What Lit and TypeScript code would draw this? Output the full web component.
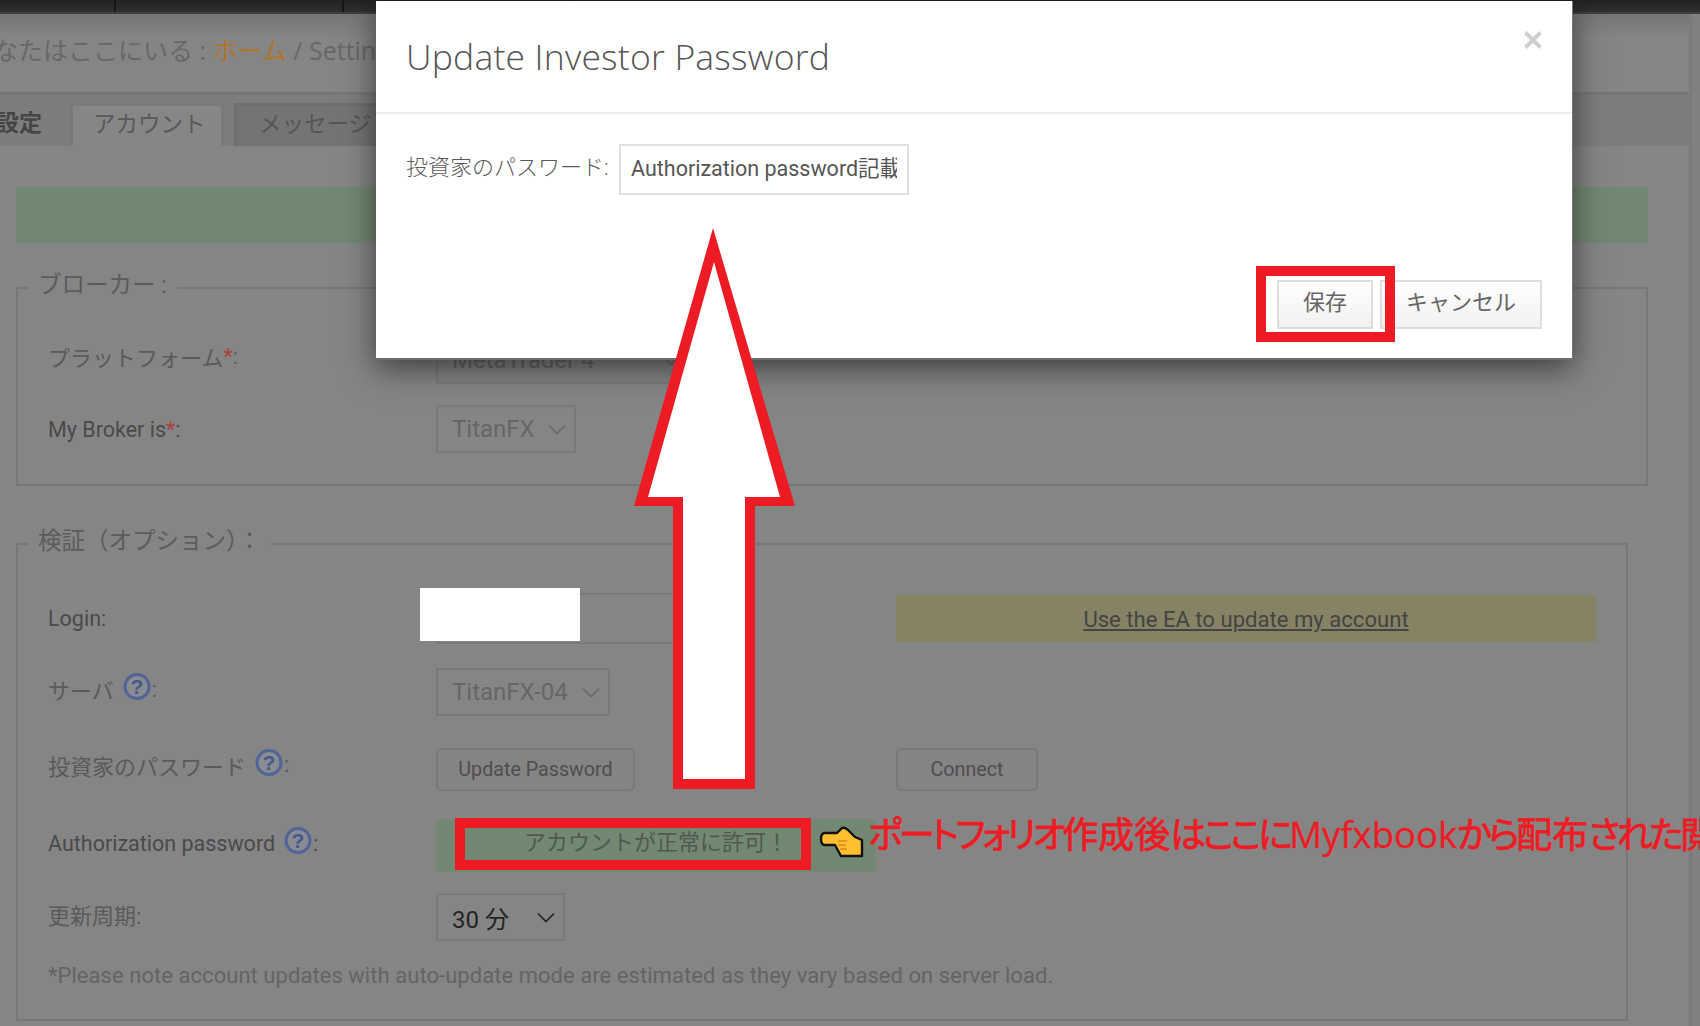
import { LitElement, html, css, svg } from "lit";
import { customElement } from "lit/decorators.js";

const chevron = (color = "#6a6a6a") => html`<svg class="chev" viewBox="0 0 18 11" width="18" height="11"><path d="M1 1.5 L9 9.5 L17 1.5" fill="none" stroke=${color} stroke-width="1.7"/></svg>`;

const help = html`<svg class="help" viewBox="0 0 30 30" width="30" height="30">
  <circle cx="15" cy="14.5" r="12" fill="#8a8c92" stroke="#4f6597" stroke-width="3"/>
  <text x="15" y="22" text-anchor="middle" font-family="'Liberation Sans',sans-serif" font-weight="700" font-size="21" fill="#44588c">?</text>
</svg>`;

@customElement("app-root")
export class AppRoot extends LitElement {
  static styles = css`
    :host {
      display: block;
      position: relative;
      width: 1700px;
      height: 1026px;
      overflow: hidden;
      background: #808080;
      font-family: Roboto, "Noto Sans CJK JP", sans-serif;
      color: #484848;
      font-size: 22px;
    }
    .topbar {
      height: 12px;
      background: linear-gradient(#222, #303030);
      border-bottom: 2px solid #3f3f3f;
      display: flex;
    }
    .topbar i { width: 2px; background: #161616; }
    .topbar i:nth-child(1) { margin-left: 114px; }
    .topbar i:nth-child(2) { margin-left: 226px; }
    .topbar i:nth-child(3) { margin-left: 226px; }
    .page {
      width: 1689px;
      height: 1012px;
      background: linear-gradient(#757575, #858585 24px);
      border-right: 3px solid #7a7a7a;
      box-sizing: content-box;
      margin-right: 8px;
    }
    .crumb {
      height: 78px;
      box-sizing: border-box;
      padding-top: 17px;
      margin-left: -32px;
      font-family: "Open Sans", "Noto Sans CJK JP", sans-serif;
      font-size: 25px;
      line-height: 38px;
      color: #686868;
      white-space: nowrap;
    }
    .crumb a { color: #b0752a; }
    .tabbar {
      height: 54px;
      box-sizing: border-box;
      border-top: 3px solid #777;
      display: flex;
      align-items: flex-end;
      background: #7d7d7d;
    }
    .tabtitle {
      width: 74px;
      box-sizing: border-box;
      margin-left: -4px;
      flex: none;
      align-self: center;
      font-weight: 700;
      font-size: 23px;
      color: #454545;
      white-space: nowrap;
    }
    .tab {
      height: 43px;
      box-sizing: border-box;
      width: 154px;
      border: 3px solid #7a7a7a;
      border-bottom: 0;
      background: #868686;
      font-size: 22.5px;
      line-height: 36px;
      padding-left: 20px;
      color: #585858;
      white-space: nowrap;
    }
    .tab.other {
      width: 200px;
      margin-left: 10px;
      padding-left: 22px;
      background: #747474;
      border-color: #6f6f6f;
      color: #565656;
    }
    .alert {
      margin: 41px 0 28px 16px;
      width: 1632px;
      height: 56px;
      background: #728872;
    }
    fieldset {
      margin: 0 0 0 16px;
      padding: 0 0 31px 30px;
      border: 2px solid #777;
      box-sizing: border-box;
      min-width: 0;
    }
    fieldset.a { width: 1632px; }
    fieldset.b { width: 1612px; margin-top: 41px; padding-bottom: 28px; }
    legend {
      margin-left: -20px;
      padding: 0 10px 5px;
      height: 34px;
      line-height: 29px;
      box-sizing: border-box;
      font-size: 23.5px;
      color: #5c5c5c;
    }
    .row {
      display: grid;
      grid-template-columns: 388px 460px 1fr;
      align-items: center;
      font-size: 21.5px;
      color: #4a4a4a;
      white-space: nowrap;
    }
    .label { display: flex; align-items: center; }
    .label.cjk { color: #5a5a5a; font-size: 22px; }
    .req { color: #a8423c; }
    .help { margin: -4px 0 0 8px; flex: none; }
    .r1 { height: 48px; margin-top: 31px; }
    .r1 .label { margin-top: -8px; }
    .r2 { height: 48px; margin-top: 21px; }
    .login { height: 51px; margin-top: 32px; }
    .login .label { margin-top: -1px; }
    .server { height: 48px; margin-top: 24px; }
    .server .label { margin-top: -6px; }
    .pw { height: 43px; margin-top: 32px; }
    .pw .label { margin-top: -10px; }
    .auth { height: 53px; margin-top: 28px; }
    .auth .label { margin-top: -5px; }
    .upd { height: 48px; margin-top: 21px; }
    .upd .label { margin-top: -6px; }
    .note { height: 30px; margin-top: 20px; line-height: 30px; color: #646464; font-size: 22px; letter-spacing: 0.05px; white-space: nowrap; }
    .select {
      height: 48px;
      box-sizing: border-box;
      border: 2px solid #7a7a7a;
      display: flex;
      align-items: center;
      justify-content: space-between;
      padding: 0 8px 0 14px;
      font-size: 24px;
      color: #666;
    }
    .select.mt { width: 254px; }
    .select.tf { width: 140px; }
    .select.srv { width: 174px; }
    .select.upd-s { width: 129px; color: #242424; }
    .field {
      height: 51px;
      width: 250px;
      box-sizing: border-box;
      border: 2px solid #7a7a7a;
    }
    .btn {
      height: 43px;
      box-sizing: border-box;
      border: 2px solid #797979;
      border-radius: 5px;
      background: #848484;
      display: flex;
      align-items: center;
      justify-content: center;
      font-size: 19.7px;
      color: #4e4e4e;
    }
    .btn.up { width: 199px; }
    .btn.con { width: 142px; }
    .warn {
      height: 47px;
      width: 700px;
      background: #868264;
      display: flex;
      align-items: center;
      justify-content: center;
      font-size: 22.1px;
      color: #444;
      text-decoration: underline;
    }
    .okmsg {
      height: 53px;
      width: 440px;
      background: #728872;
      box-sizing: border-box;
      padding: 0 0 12px 88px;
      display: flex;
      align-items: center;
      font-size: 22px;
      color: #505850;
    }
    .modal {
      position: absolute;
      left: 376px;
      top: 1px;
      width: 1197px;
      height: 359px;
      box-sizing: border-box;
      background: #fff;
      border-right: 1px solid #777;
      border-bottom: 2px solid #6d6d6d;
      box-shadow: 0 8px 30px rgba(0, 0, 0, 0.55);
      display: flex;
      flex-direction: column;
    }
    .m-head {
      height: 113px;
      box-sizing: border-box;
      flex: none;
      border-bottom: 2px solid #eee;
      padding: 0 30px 0 30px;
      display: flex;
      align-items: flex-start;
      justify-content: space-between;
    }
    .m-head h2 {
      margin: 29px 0 0;
      font-family: "Open Sans", sans-serif;
      font-size: 35.5px;
      line-height: 52px;
      font-weight: 300;
      color: #555;
      letter-spacing: 0.2px;
    }
    .close { margin-top: 30px; flex: none; }
    .m-body {
      flex: none;
      height: 166px;
      box-sizing: border-box;
      padding: 30px 0 0 30px;
      display: flex;
      align-items: flex-start;
      gap: 9px;
    }
    .m-label { font-size: 22px; color: #5a5a5a; height: 51px; width: 204px; line-height: 48px; white-space: nowrap; font-weight: 300; }
    .m-input {
      width: 290px;
      height: 51px;
      box-sizing: border-box;
      border: 2px solid #e0e0e0;
      padding: 0 10px;
      font-size: 21.5px;
      line-height: 45px;
      color: #555;
    }
    .m-clip { white-space: nowrap; overflow: hidden; height: 47px; }
    .m-foot {
      display: flex;
      justify-content: flex-end;
      gap: 7px;
      padding-right: 30px;
    }
    .m-btn {
      height: 49px;
      box-sizing: border-box;
      border: 2px solid #dedede;
      background: linear-gradient(#fff, #f1f1f1);
      display: flex;
      align-items: center;
      justify-content: center;
      font-size: 22px;
      color: #666;
      padding-bottom: 9px;
    }
    .m-btn.save { width: 96px; }
    .m-btn.cancel { width: 162px; }
    .redbox {
      position: absolute;
      box-sizing: border-box;
      border: 10px solid #ed1c24;
    }
    .redbox.rb-save { left: 1256px; top: 266px; width: 139px; height: 76px; }
    .redbox.rb-ok { left: 455px; top: 818px; width: 356px; height: 52px; }
    .arrow { position: absolute; left: 0; top: 0; pointer-events: none; }
    .whitebox { position: absolute; left: 420px; top: 588px; width: 160px; height: 53px; background: #fff; }
    .hand { position: absolute; left: 810px; top: 815px; }
    .callout {
      position: absolute;
      left: 868px;
      top: 805px;
      line-height: 54px;
      font-family: "Noto Sans CJK JP", sans-serif;
      font-feature-settings: "palt";
      font-size: 36px;
      color: #ed1c24;
      white-space: nowrap;
      -webkit-text-stroke: 0.8px #ed1c24;
    }
    .callout .kana { letter-spacing: -3.5px; }
    .callout .latin { font-family: "Open Sans", sans-serif; font-size: 36.5px; -webkit-text-stroke: 0.3px #ed1c24; }
  `;

  render() {
    return html`
      <div class="topbar"><i></i><i></i><i></i></div>
      <div class="page">
        <div class="crumb">あなたはここにいる : <a>ホーム</a> / Settings</div>
        <div class="tabbar">
          <div class="tabtitle">設定</div>
          <div class="tab">アカウント</div>
          <div class="tab other">メッセージ</div>
        </div>
        <div class="alert"></div>
        <fieldset class="a">
          <legend>ブローカー :</legend>
          <div class="row r1">
            <div class="label cjk">プラットフォーム<span class="req">*</span>:</div>
            <div><div class="select mt">MetaTrader 4 ${chevron()}</div></div>
          </div>
          <div class="row r2">
            <div class="label">My Broker is<span class="req">*</span>:</div>
            <div><div class="select tf">TitanFX ${chevron()}</div></div>
          </div>
        </fieldset>
        <fieldset class="b">
          <legend>検証（オプション）：</legend>
          <div class="row login">
            <div class="label">Login:</div>
            <div><div class="field"></div></div>
            <div class="warn">Use the EA to update my account</div>
          </div>
          <div class="row server">
            <div class="label cjk">サーバ ${help}:</div>
            <div><div class="select srv">TitanFX-04 ${chevron()}</div></div>
          </div>
          <div class="row pw">
            <div class="label cjk">投資家のパスワード ${help}:</div>
            <div><div class="btn up">Update Password</div></div>
            <div class="btn con">Connect</div>
          </div>
          <div class="row auth">
            <div class="label">Authorization password ${help}:</div>
            <div class="okmsg">アカウントが正常に許可！</div>
          </div>
          <div class="row upd">
            <div class="label cjk">更新周期:</div>
            <div><div class="select upd-s">30 分 ${chevron("#222")}</div></div>
          </div>
          <div class="note">*Please note account updates with auto-update mode are estimated as they vary based on server load.</div>
        </fieldset>
      </div>

      <div class="whitebox"></div>

      <div class="modal">
        <div class="m-head">
          <h2>Update Investor Password</h2>
          <svg class="close" viewBox="0 0 18 18" width="18" height="18"><path d="M1.5 1.5 L16.5 16.5 M16.5 1.5 L1.5 16.5" stroke="#cfcfcf" stroke-width="4"/></svg>
        </div>
        <div class="m-body">
          <div class="m-label">投資家のパスワード:</div>
          <div class="m-input"><div class="m-clip">Authorization password記載</div></div>
        </div>
        <div class="m-foot">
          <div class="m-btn save">保存</div>
          <div class="m-btn cancel">キャンセル</div>
        </div>
      </div>

      <div class="redbox rb-save"></div>
      <div class="redbox rb-ok"></div>

      <svg class="arrow" width="1700" height="1026" viewBox="0 0 1700 1026">
        ${svg`<polygon fill="#ed1c24" points="713,228 795,506 755,506 755,789 673,789 673,506 634,506"/>
        <polygon fill="#fff" points="714,262 780,497 745,497 745,779 683,779 683,497 648,497"/>`}
      </svg>

      <svg class="hand" width="70" height="50" viewBox="0 0 70 50">
        <path d="M15 18 H27 L32 13 Q35 12 38 15 L45 22 L52 25 V41 H31 L25 30 H15 Q11 30 11 24 Q11 18 15 18 Z" fill="#fdbf2e" stroke="#111" stroke-width="2.4" stroke-linejoin="round"/>
        <path d="M28 26 H37 M28 30 H36 M30 34 H37" stroke="#d98c1c" stroke-width="1.4"/>
      </svg>
      <div class="callout"><span class="kana">ポートフォリオ</span>作成後<span class="kana">はここに</span><span class="latin">Myfxbook</span><span class="kana">から</span>配布<span class="kana">された</span>閲</div>
    `;
  }
}
